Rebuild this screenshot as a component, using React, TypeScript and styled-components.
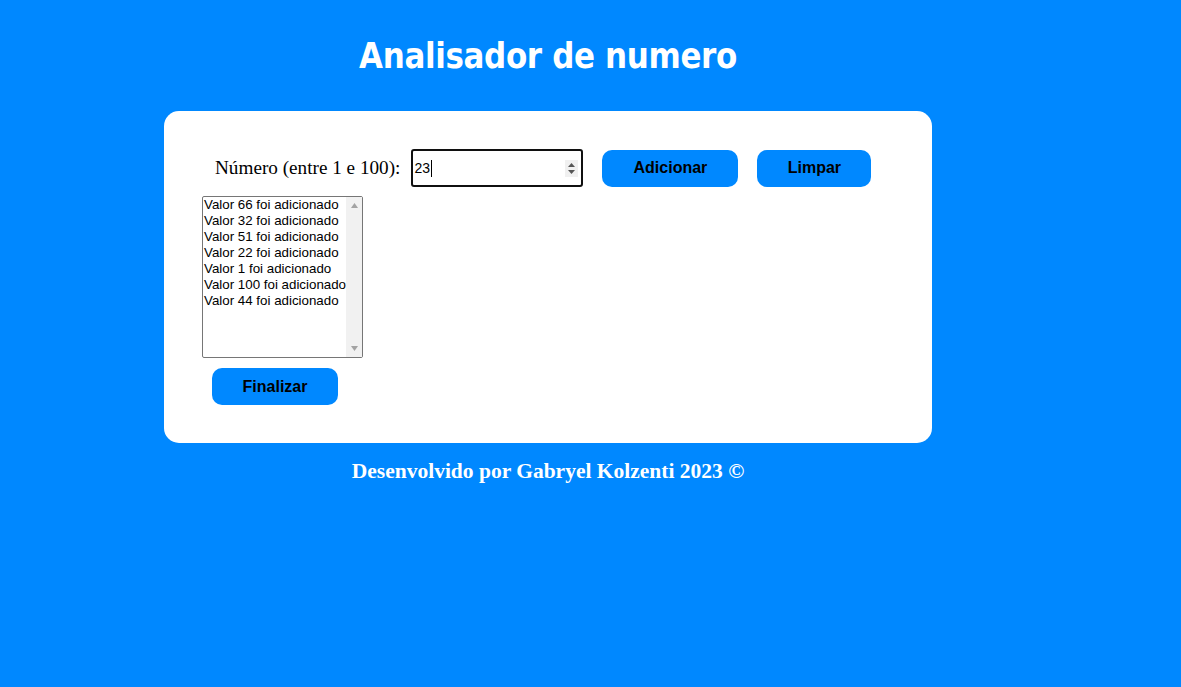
import styled, { createGlobalStyle } from 'styled-components';

const GlobalStyle = createGlobalStyle`
	html, body {
		margin: 0;
		padding: 0;
		background: #0088ff;
	}
	body {
		min-height: 687px;
		font-family: "Liberation Serif", "Times New Roman", serif;
	}
`;

const valores = [66, 32, 51, 22, 1, 100, 44];

const App = (): JSX.Element => {
	return (
		<>
			<GlobalStyle />
			<StyledPage>
				<StyledTitle>Analisador de numero</StyledTitle>
				<StyledCard>
					<StyledRow>
						<StyledLabel>Número (entre 1 e 100):</StyledLabel>
						<StyledInputBox>
							<StyledInputText>
								23
								<StyledCaret />
							</StyledInputText>
							<StyledSpinner>
								<svg width="9" height="13" viewBox="0 0 9 13">
									<path d="M4.5 1 L8 5 H1 Z" fill="#555" />
									<path d="M4.5 12 L8 8 H1 Z" fill="#555" />
								</svg>
							</StyledSpinner>
						</StyledInputBox>
						<StyledButton width={136}>Adicionar</StyledButton>
						<StyledButton width={114}>Limpar</StyledButton>
					</StyledRow>
					<StyledList>
						<StyledListItems>
							{valores.map((v) => (
								<StyledOption key={v}>Valor {v} foi adicionado</StyledOption>
							))}
						</StyledListItems>
						<StyledScrollbar>
							<svg width="7" height="5" viewBox="0 0 7 5">
								<path d="M3.5 0 L7 5 H0 Z" fill="#a3a3a3" />
							</svg>
							<svg width="7" height="5" viewBox="0 0 7 5">
								<path d="M3.5 5 L7 0 H0 Z" fill="#a3a3a3" />
							</svg>
						</StyledScrollbar>
					</StyledList>
					<StyledFinalizar>
						<StyledButton width={126}>Finalizar</StyledButton>
					</StyledFinalizar>
				</StyledCard>
				<StyledFooter>Desenvolvido por Gabryel Kolzenti 2023 ©</StyledFooter>
			</StyledPage>
		</>
	);
};

export default App;

const StyledPage = styled.div`
	width: 768px;
	margin-left: 164px;
	padding-top: 36px;
	display: flex;
	flex-direction: column;
	align-items: stretch;
`;

const StyledTitle = styled.h1`
	margin: 0 0 35px 0;
	text-align: center;
	color: #ffffff;
	font-family: "DejaVu Sans", Verdana, sans-serif;
	font-size: 35px;
	font-weight: bold;
	line-height: 40px;
	letter-spacing: -0.4px;
	transform: scaleX(0.885);
`;

const StyledCard = styled.div`
	background: #ffffff;
	border-radius: 15px;
	height: 332px;
	box-sizing: border-box;
	padding: 38px 0 0 38px;
`;

const StyledRow = styled.div`
	display: flex;
	align-items: center;
	height: 38px;
	padding-left: 13px;
`;

const StyledLabel = styled.label`
	font-family: "Liberation Serif", "Times New Roman", serif;
	font-size: 19.2px;
	color: #000;
	margin-right: 11px;
`;

const StyledInputBox = styled.div`
	display: flex;
	align-items: center;
	justify-content: space-between;
	width: 172px;
	height: 38px;
	box-sizing: border-box;
	border: 2px solid #101010;
	border-radius: 3px;
	padding: 0 3px 0 1px;
	margin-right: 19px;
`;

const StyledInputText = styled.span`
	display: flex;
	align-items: center;
	font-family: "Liberation Sans", Arial, sans-serif;
	font-size: 14px;
	color: #000;
`;

const StyledCaret = styled.span`
	display: inline-block;
	width: 1px;
	height: 17px;
	background: #000;
	margin-left: 1px;
`;

const StyledSpinner = styled.span`
	display: flex;
	align-items: center;
	justify-content: center;
	width: 13px;
	height: 17px;
	background: #f0f0f0;
`;

type StyledButtonProps = {
	width: number;
};
const StyledButton = styled.button<StyledButtonProps>(
	({ width }) => `
	width: ${width}px;
	height: 37px;
	margin-right: 19px;
	border: none;
	border-radius: 10px;
	background: #0088ff;
	color: #000;
	font-family: "Liberation Sans", Arial, sans-serif;
	font-size: 16px;
	font-weight: bold;
	padding: 0;
	cursor: pointer;
	`
);

const StyledList = styled.div`
	display: flex;
	width: 161px;
	height: 162px;
	box-sizing: border-box;
	border: 1px solid #767676;
	border-radius: 2px;
	margin-top: 9px;
`;

const StyledListItems = styled.div`
	flex: 1;
	overflow: hidden;
`;

const StyledOption = styled.div`
	font-family: "Liberation Sans", Arial, sans-serif;
	font-size: 13.33px;
	line-height: 16px;
	color: #000;
	white-space: nowrap;
	padding-left: 1px;
`;

const StyledScrollbar = styled.div`
	width: 16px;
	background: #f1f1f1;
	display: flex;
	flex-direction: column;
	align-items: center;
	justify-content: space-between;
	padding: 6px 0;
	box-sizing: border-box;
`;

const StyledFinalizar = styled.div`
	display: flex;
	margin-top: 10px;
	padding-left: 10px;
`;

const StyledFooter = styled.p`
	margin: 16px 0 0 0;
	text-align: center;
	color: #ffffff;
	font-family: "Liberation Serif", "Times New Roman", serif;
	font-size: 21.5px;
	font-weight: bold;
`;
